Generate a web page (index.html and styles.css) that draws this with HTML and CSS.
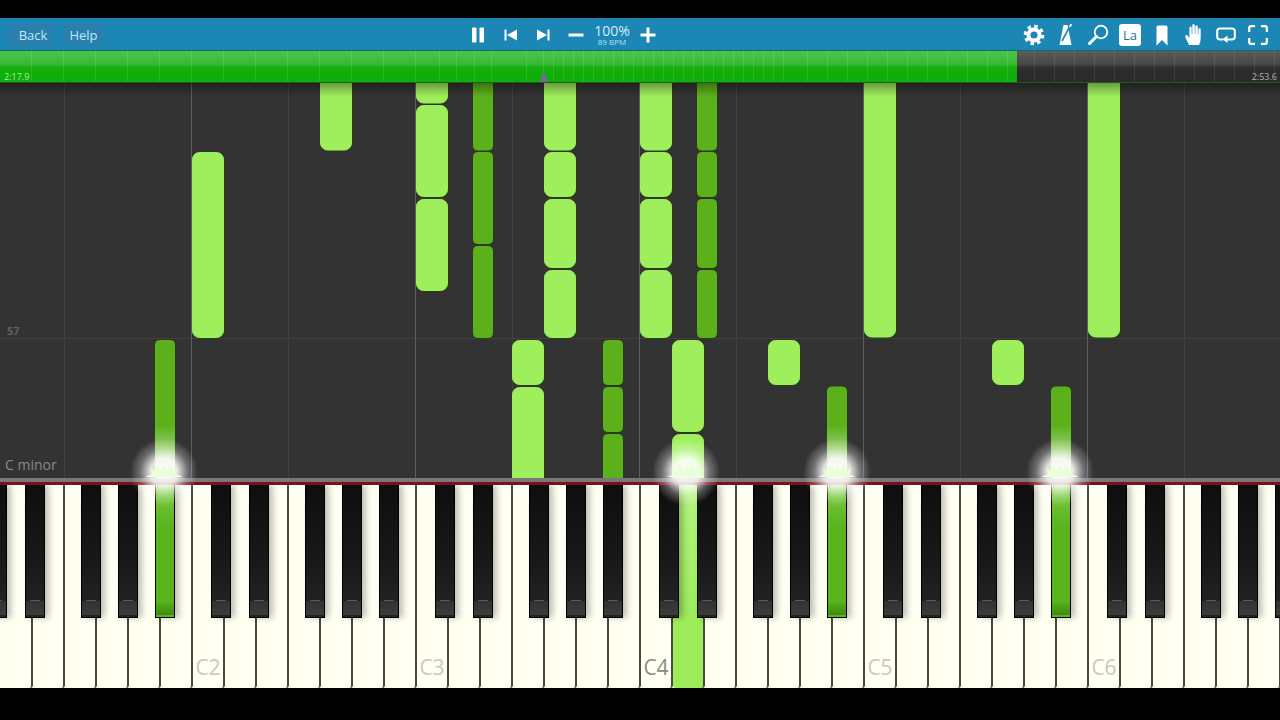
FILE: index.html
```html
<!DOCTYPE html>
<html lang="en">
<head>
    <meta charset="UTF-8">
    <meta name="viewport" content="width=device-width, initial-scale=1.0">
    <title>Piano Roll</title>
    <link rel="stylesheet" href="styles.css">
</head>
<body>
    <div class="player">
        <header class="toolbar">
            <div class="nav-group">
                <button class="nav-button back-button">Back</button>
                <button class="nav-button">Help</button>
            </div>
            <div class="transport">
                <button class="icon-button" aria-label="Pause">
                    <svg width="14" height="16" viewBox="0 0 14 16"><rect x="1" y="0.5" width="4.5" height="15" rx="0.8"/><rect x="8.5" y="0.5" width="4.5" height="15" rx="0.8"/></svg>
                </button>
                <button class="icon-button nudge" aria-label="Previous">
                    <svg width="14" height="12" viewBox="0 0 14 12"><rect x="0.5" y="0.5" width="2" height="11"/><path d="M13 0.5V11.5L3 6Z"/></svg>
                </button>
                <button class="icon-button" aria-label="Next">
                    <svg width="14" height="12" viewBox="0 0 14 12"><rect x="11.5" y="0.5" width="2" height="11"/><path d="M1 0.5V11.5L11 6Z"/></svg>
                </button>
                <button class="icon-button nudge" aria-label="Slower">
                    <svg width="16" height="4" viewBox="0 0 16 4"><rect x="0.5" y="0.5" width="15" height="3"/></svg>
                </button>
                <div class="speed">
                    <span class="speed-value">100%</span>
                    <span class="speed-bpm">89 BPM</span>
                </div>
                <button class="icon-button" aria-label="Faster">
                    <svg width="16" height="16" viewBox="0 0 16 16"><path d="M6.5 0.5H9.5V6.5H15.5V9.5H9.5V15.5H6.5V9.5H0.5V6.5H6.5Z"/></svg>
                </button>
            </div>
            <div class="tools">
                <button class="icon-button" aria-label="Settings">
                    <svg width="22" height="22" viewBox="0 0 22 22"><circle class="line-white" cx="11" cy="11" r="5.6" stroke-width="4"/><circle class="line-white" cx="11" cy="11" r="8.6" stroke-width="3.4" stroke-dasharray="3.4 3.35"/></svg>
                </button>
                <button class="icon-button" aria-label="Metronome">
                    <svg width="18" height="22" viewBox="0 0 18 22"><path d="M6.5 1H10.5L14.5 21H2.5Z"/><path class="line-blue" d="M5 17L12.5 3" stroke-width="1.6"/><path class="line-white" d="M12.5 3L14.5 0" stroke-width="1.6"/></svg>
                </button>
                <button class="icon-button" aria-label="Find">
                    <svg width="22" height="22" viewBox="0 0 22 22"><circle class="line-white" cx="14" cy="8" r="6.3" stroke-width="1.8"/><path class="line-white" d="M9.5 12.5L2.5 19.5" stroke-width="3" stroke-linecap="round"/></svg>
                </button>
                <button class="icon-button" aria-label="Labels"><span class="label-tile">La</span></button>
                <button class="icon-button" aria-label="Bookmark">
                    <svg width="12" height="21" viewBox="0 0 12 21"><path d="M0.5 2Q0.5 0.5 2 0.5H10Q11.5 0.5 11.5 2V20.5L6 15L0.5 20.5Z"/></svg>
                </button>
                <button class="icon-button" aria-label="Hand">
                    <svg width="20" height="24" viewBox="0 0 20 24"><path d="M5 22L1.5 14.5Q0.7 12.5 2 12Q3.4 11.6 4.3 13.5L5.4 15.5V5Q5.4 3.6 6.5 3.6Q7.6 3.6 7.7 5V11H8.3V2.5Q8.3 1 9.5 1Q10.7 1 10.8 2.5V11H11.4V3.8Q11.4 2.4 12.6 2.4Q13.8 2.4 13.8 3.8V11.5H14.4V6.5Q14.4 5.2 15.5 5.2Q16.7 5.2 16.7 6.5V15Q16.7 19 15 22Z"/></svg>
                </button>
                <button class="icon-button" aria-label="Loop">
                    <svg width="20" height="16" viewBox="0 0 20 16"><path class="line-white" d="M7 12.5H4Q1.2 12.5 1.2 9.7V4Q1.2 1.5 4 1.5H16Q18.8 1.5 18.8 4V9.7Q18.8 12.5 16 12.5H11" stroke-width="2"/><path d="M11.5 8.5V16L6.5 12.3Z"/></svg>
                </button>
                <button class="icon-button" aria-label="Fullscreen">
                    <svg width="20" height="20" viewBox="0 0 20 20"><path class="line-white" d="M1.2 7V3Q1.2 1.2 3 1.2H7M13 1.2H17Q18.8 1.2 18.8 3V7M18.8 13V17Q18.8 18.8 17 18.8H13M7 18.8H3Q1.2 18.8 1.2 17V13" stroke-width="2.2"/></svg>
                </button>
            </div>
        </header>

        <div class="progress">
            <div class="elapsed">
                <div class="ticks ticks-wide"></div>
                <div class="ticks ticks-mid"></div>
                <div class="ticks ticks-fine"></div>
                <div class="ticks ticks-even"></div>
            </div>
            <div class="remaining"></div>
            <span class="time time-start">2:17.9</span>
            <span class="time time-end">2:53.6</span>
            <span class="playhead"></span>
        </div>

        <div class="stage">
            <div class="roll">
                <svg class="roll-notes" width="1280" height="395" viewBox="0 83 1280 395">
                    <path class="grid-dim" d="M0 338.5H1280M64.5 83V478M288.5 83V478M512.5 83V478M736.5 83V478M960.5 83V478M1184.5 83V478"/>
                    <path class="grid-bright" d="M191.5 83V478M415.5 83V478M639.5 83V478M863.5 83V478M1087.5 83V478"/>

                    <rect class="note-light" x="320.5" y="60" width="31" height="90"/>
                    <rect class="note-light" x="192.5" y="152.5" width="31" height="185"/>
                    <rect class="note-light" x="416.5" y="60" width="31" height="43"/>
                    <rect class="note-light" x="416.5" y="105.5" width="31" height="91"/>
                    <rect class="note-light" x="416.5" y="199.5" width="31" height="91"/>
                    <rect class="note-light" x="544.5" y="60" width="31" height="90"/>
                    <rect class="note-light" x="544.5" y="152.5" width="31" height="44"/>
                    <rect class="note-light" x="544.5" y="199.5" width="31" height="68"/>
                    <rect class="note-light" x="544.5" y="270.5" width="31" height="67"/>
                    <rect class="note-light" x="640.5" y="60" width="31" height="90"/>
                    <rect class="note-light" x="640.5" y="152.5" width="31" height="44"/>
                    <rect class="note-light" x="640.5" y="199.5" width="31" height="68"/>
                    <rect class="note-light" x="640.5" y="270.5" width="31" height="67"/>
                    <rect class="note-light" x="864.5" y="60" width="31" height="277"/>
                    <rect class="note-light" x="1088.5" y="60" width="31" height="277"/>
                    <rect class="note-light" x="512.5" y="340.5" width="31" height="44"/>
                    <rect class="note-light" x="512.5" y="387.5" width="31" height="110"/>
                    <rect class="note-light" x="672.5" y="340.5" width="31" height="91"/>
                    <rect class="note-light" x="672.5" y="434.5" width="31" height="60"/>
                    <rect class="note-light" x="768.5" y="340.5" width="31" height="44"/>
                    <rect class="note-light" x="992.5" y="340.5" width="31" height="44"/>

                    <rect class="note-dark" x="473.5" y="60" width="19" height="90"/>
                    <rect class="note-dark" x="473.5" y="152.5" width="19" height="91"/>
                    <rect class="note-dark" x="473.5" y="246.5" width="19" height="91"/>
                    <rect class="note-dark" x="697.5" y="60" width="19" height="90"/>
                    <rect class="note-dark" x="697.5" y="152.5" width="19" height="44"/>
                    <rect class="note-dark" x="697.5" y="199.5" width="19" height="68"/>
                    <rect class="note-dark" x="697.5" y="270.5" width="19" height="67"/>
                    <rect class="note-dark" x="155.5" y="340.5" width="19" height="160"/>
                    <rect class="note-dark" x="603.5" y="340.5" width="19" height="44"/>
                    <rect class="note-dark" x="603.5" y="387.5" width="19" height="44"/>
                    <rect class="note-dark" x="603.5" y="434.5" width="19" height="60"/>
                    <rect class="note-dark" x="827.5" y="387" width="19" height="110"/>
                    <rect class="note-dark" x="1051.5" y="387" width="19" height="110"/>
                </svg>
                <span class="measure-number">57</span>
                <span class="key-name">C minor</span>
            </div>

            <div class="rail"></div>
            <div class="red-felt"></div>

            <div class="keyboard">
                <div class="white-keys">
                    <span class="white-key"></span><span class="white-key"></span><span class="white-key"></span><span class="white-key"></span><span class="white-key"></span><span class="white-key"></span>
                    <span class="white-key"><em class="key-label">C2</em></span><span class="white-key"></span><span class="white-key"></span><span class="white-key"></span><span class="white-key"></span><span class="white-key"></span><span class="white-key"></span>
                    <span class="white-key"><em class="key-label">C3</em></span><span class="white-key"></span><span class="white-key"></span><span class="white-key"></span><span class="white-key"></span><span class="white-key"></span><span class="white-key"></span>
                    <span class="white-key"><em class="key-label key-label-middle">C4</em></span><span class="white-key pressed"></span><span class="white-key"></span><span class="white-key"></span><span class="white-key"></span><span class="white-key"></span><span class="white-key"></span>
                    <span class="white-key"><em class="key-label">C5</em></span><span class="white-key"></span><span class="white-key"></span><span class="white-key"></span><span class="white-key"></span><span class="white-key"></span><span class="white-key"></span>
                    <span class="white-key"><em class="key-label">C6</em></span><span class="white-key"></span><span class="white-key"></span><span class="white-key"></span><span class="white-key"></span><span class="white-key"></span>
                </div>
                <div class="black-keys">
                    <span class="black-key"></span><span class="black-key"></span><span class="black-key"></span><span class="black-key"></span><span class="black-key pressed"></span>
                    <span class="black-key"></span><span class="black-key"></span><span class="black-key"></span><span class="black-key"></span><span class="black-key"></span>
                    <span class="black-key"></span><span class="black-key"></span><span class="black-key"></span><span class="black-key"></span><span class="black-key"></span>
                    <span class="black-key"></span><span class="black-key"></span><span class="black-key"></span><span class="black-key"></span><span class="black-key pressed"></span>
                    <span class="black-key"></span><span class="black-key"></span><span class="black-key"></span><span class="black-key"></span><span class="black-key pressed"></span>
                    <span class="black-key"></span><span class="black-key"></span><span class="black-key"></span><span class="black-key"></span><span class="black-key"></span>
                </div>
            </div>

            <!-- sparks where the notes hit the keys -->
            <svg class="glow-layer" width="1280" height="440" viewBox="0 83 1280 440">
                <defs>
                    <radialGradient id="glow">
                        <stop offset="0" stop-color="#fff" stop-opacity="0.95"/>
                        <stop offset="0.4" stop-color="#fff" stop-opacity="0.85"/>
                        <stop offset="0.7" stop-color="#fff" stop-opacity="0.3"/>
                        <stop offset="1" stop-color="#fff" stop-opacity="0"/>
                    </radialGradient>
                    <linearGradient id="fade" x1="0" y1="0" x2="0" y2="1">
                        <stop offset="0" stop-color="#fff" stop-opacity="0"/>
                        <stop offset="1" stop-color="#fff" stop-opacity="0.75"/>
                    </linearGradient>
                    <polygon id="spark" points="-19,0 -12,-3 -14,-9 -9,-5 -7,-13 -3,-6 0,-12 3,-7 7,-13 9,-5 14,-9 12,-3 19,0"/>
                </defs>
                <rect x="155" y="425" width="20" height="53" fill="url(#fade)"/>
                <rect x="827" y="425" width="20" height="53" fill="url(#fade)"/>
                <rect x="1051" y="425" width="20" height="53" fill="url(#fade)"/>
                <circle cx="164" cy="472" r="34" fill="url(#glow)"/>
                <circle cx="686" cy="472" r="34" fill="url(#glow)"/>
                <circle cx="837" cy="472" r="34" fill="url(#glow)"/>
                <circle cx="1060" cy="472" r="34" fill="url(#glow)"/>
                <use class="spark" href="#spark" x="164" y="477"/>
                <use class="spark" href="#spark" x="686" y="477"/>
                <use class="spark" href="#spark" x="837" y="477"/>
                <use class="spark" href="#spark" x="1060" y="477"/>
            </svg>
        </div>
    </div>
</body>
</html>
```

FILE: styles.css
```css
body {
    font-family: 'Open Sans', 'Noto Sans', sans-serif;
    background-color: #000000;
    margin: 0;
    padding: 18px 0 0;
    height: 702px;
    overflow: hidden;
}
button {
    font-family: inherit;
    border: none;
    padding: 0;
    background: none;
    color: inherit;
}

/* toolbar */
.toolbar {
    height: 33px;
    display: flex;
    align-items: center;
    padding-top: 2px;
    background-color: #1c86b4;
    border-bottom: 1px solid #0f6a72;
    box-sizing: border-box;
}
.nav-group {
    width: 462px;
    display: flex;
    align-items: center;
    gap: 12px;
    padding-left: 5px;
    box-sizing: border-box;
}
.nav-button {
    height: 22px;
    width: 39px;
    background-color: #2b7fac;
    color: #bfeafa;
    font-size: 13px;
    border-radius: 2px;
}
.back-button {
    width: 47px;
    padding-left: 9px;
    clip-path: polygon(0 50%, 9px 0, 100% 0, 100% 100%, 9px 100%);
}
.transport, .tools {
    display: flex;
    align-items: center;
}
.tools {
    margin-left: auto;
    padding-right: 6px;
}
.icon-button {
    width: 32px;
    height: 32px;
    display: flex;
    align-items: center;
    justify-content: center;
}
.nudge {
    margin-left: 1px;
}
.icon-button svg {
    fill: #ffffff;
}
.line-white, .line-blue {
    fill: none;
    stroke: #ffffff;
}
.line-blue {
    stroke: #1c86b4;
}
.speed {
    width: 40px;
    display: flex;
    flex-direction: column;
    align-items: center;
    color: #d2f0fa;
    white-space: nowrap;
}
.speed-value {
    font-size: 14px;
    line-height: 13px;
}
.speed-bpm {
    font-size: 8px;
    line-height: 9px;
    color: #b5e2f2;
}
.label-tile {
    width: 22px;
    height: 22px;
    display: flex;
    align-items: center;
    justify-content: center;
    background-color: #ffffff;
    border-radius: 3px;
    color: #1f6d92;
    font-size: 13px;
}

/* progress strip */
.progress {
    height: 32px;
    display: flex;
    position: relative;
    border-bottom: 1px solid #1c5c1c;
    box-sizing: border-box;
}
.elapsed {
    width: 1017px;
    display: flex;
    background: linear-gradient(#4cc54a, #38ba35 42%, #12ae0a 54%, #10ae08);
}
.remaining {
    flex: 1;
    background:
        repeating-linear-gradient(90deg, transparent 0 19px, rgba(255, 255, 255, 0.08) 19px 20px) -2px 0,
        linear-gradient(#5c5c5c, #484848 42%, #2e2e2e 54%, #2a2a2a);
}
.ticks {
    height: 100%;
}
.ticks-wide {
    width: 422px;
    background: repeating-linear-gradient(90deg, transparent 0 31px, rgba(255, 255, 255, 0.1) 31px 32px);
}
.ticks-mid {
    width: 122px;
    background: repeating-linear-gradient(90deg, transparent 0 16.5px, rgba(255, 255, 255, 0.1) 16.5px 17.5px);
}
.ticks-fine {
    width: 244px;
    background: repeating-linear-gradient(90deg, transparent 0 9px, rgba(255, 255, 255, 0.1) 9px 10px);
}
.ticks-even {
    flex: 1;
    background: repeating-linear-gradient(90deg, transparent 0 19px, rgba(255, 255, 255, 0.1) 19px 20px);
}
.time {
    position: absolute;
    top: 20px;
    font-size: 9px;
    line-height: 12px;
}
.time-start {
    left: 4px;
    color: #a8eca0;
}
.time-end {
    right: 3px;
    color: #b0b0b0;
}
.playhead {
    position: absolute;
    left: 540px;
    bottom: 0;
    width: 8px;
    height: 10px;
    background-color: #7f63a8;
    clip-path: polygon(50% 0, 100% 100%, 0 100%);
}

/* falling notes */
.stage {
    position: relative;
}
.roll {
    height: 395px;
    position: relative;
    background-color: #333333;
}
.roll::after {
    content: "";
    position: absolute;
    top: 0;
    left: 0;
    right: 0;
    height: 14px;
    background: linear-gradient(rgba(0, 0, 0, 0.34), transparent);
}
.roll-notes {
    display: block;
}
.grid-dim {
    fill: none;
    stroke: #404040;
}
.grid-bright {
    fill: none;
    stroke: #5e5e5e;
}
.note-light {
    fill: #9fef5d;
    stroke: #9fef5d;
    rx: 7px;
    filter: drop-shadow(1px 1px 0 rgba(30, 70, 5, 0.8));
}
.note-dark {
    fill: #5cb11a;
    stroke: #5cb11a;
    rx: 4px;
    filter: drop-shadow(1px 1px 0 rgba(30, 70, 5, 0.7));
}
.measure-number {
    position: absolute;
    left: 7px;
    top: 241px;
    font-size: 11px;
    font-weight: 700;
    line-height: 14px;
    color: #606060;
}
.key-name {
    position: absolute;
    left: 5px;
    top: 372px;
    font-size: 14px;
    line-height: 20px;
    color: #8a8a8a;
}

/* keyboard */
.rail {
    height: 4px;
    background-color: #777777;
}
.red-felt {
    height: 3px;
    background-color: #7c0f1e;
}
.keyboard {
    height: 203px;
    position: relative;
    overflow: hidden;
    background-color: #fffff2;
}
.white-keys {
    display: flex;
    height: 100%;
    margin-left: 1px;
}
.white-key {
    width: 32px;
    height: 100%;
    flex-shrink: 0;
    box-sizing: border-box;
    display: flex;
    justify-content: center;
    padding-top: 167px;
    background-color: #fffff2;
    border-right: 2px solid #4a4a3e;
    border-radius: 0 0 3px 3px;
}
.white-key.pressed {
    background: linear-gradient(#b4f480, #9bec58 70%);
}
.key-label {
    font-style: normal;
    font-size: 21px;
    line-height: 30px;
    color: #c9c9bd;
}
.key-label-middle {
    color: #8c8c82;
}
.black-keys {
    position: absolute;
    top: 0;
    left: -13px;
    display: flex;
    gap: 17px;
}
.black-key {
    position: relative;
    width: 20px;
    height: 133px;
    flex-shrink: 0;
    box-sizing: border-box;
    background: linear-gradient(#0e0e0e, #191919 60%, #222222 88%);
    border: 1px solid #000000;
    border-top: none;
    box-shadow: 4px 0 6px rgba(0, 0, 0, 0.26);
}
.black-key:nth-child(5n+2) {
    margin-left: 1px;
}
.black-key:nth-child(5n+3), .black-key:nth-child(5n+6) {
    margin-left: 19px;
}
.black-key::after {
    content: "";
    position: absolute;
    left: 0;
    right: 0;
    bottom: 2px;
    height: 14px;
    background: linear-gradient(#323232, #3c3c3c);
}
.black-key::before {
    content: "";
    position: absolute;
    left: 4px;
    right: 4px;
    bottom: 16px;
    height: 1px;
    background-color: #5a5a5a;
}
.black-key.pressed {
    background: linear-gradient(#7ccc46, #5cb41c 30%, #5cb41c);
}
.black-key.pressed::after {
    background: linear-gradient(#5cb41c, #3f8a12);
}
.black-key.pressed::before {
    display: none;
}

.glow-layer {
    position: absolute;
    top: 0;
    left: 0;
    pointer-events: none;
}
.spark {
    fill: #eaffd9;
}
```
